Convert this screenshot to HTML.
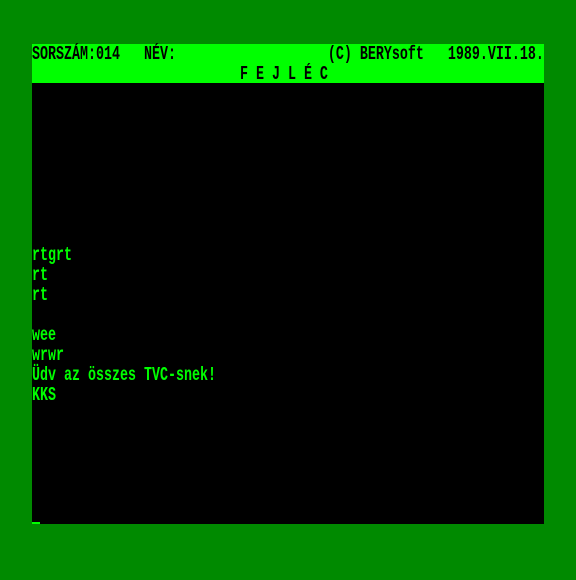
<!DOCTYPE html>
<html><head><meta charset="utf-8"><style>
html,body{margin:0;padding:0;}
body{width:576px;height:580px;background:#008a00;position:relative;overflow:hidden;}
#scr{position:absolute;left:32px;top:44px;width:512px;height:480px;background:#000;}
#hdr{position:absolute;left:0;top:0;width:512px;height:39px;background:#00ff00;}
.l{position:absolute;left:0;height:20px;white-space:pre;font-family:"Liberation Mono",monospace;font-weight:bold;font-size:13.33px;line-height:14px;color:#00ff00;transform:scaleY(1.45);transform-origin:0 0;}
.h{color:#000;}
#cur{position:absolute;left:0;top:478px;width:8px;height:2px;background:#00ff00;}
</style></head><body>
<div id="scr">
<div id="hdr"></div>
<div class="l h" style="top:2px">SORSZÁM:014   NÉV:                   (C) BERYsoft   1989.VII.18.</div>
<div class="l h" style="top:22px">                          F E J L É C</div>
<div class="l" style="top:203px">rtgrt</div>
<div class="l" style="top:223px">rt</div>
<div class="l" style="top:243px">rt</div>
<div class="l" style="top:283px">wee</div>
<div class="l" style="top:303px">wrwr</div>
<div class="l" style="top:323px">Üdv az összes TVC-snek!</div>
<div class="l" style="top:343px">KKS</div>
<div id="cur"></div>
</div>
</body></html>
